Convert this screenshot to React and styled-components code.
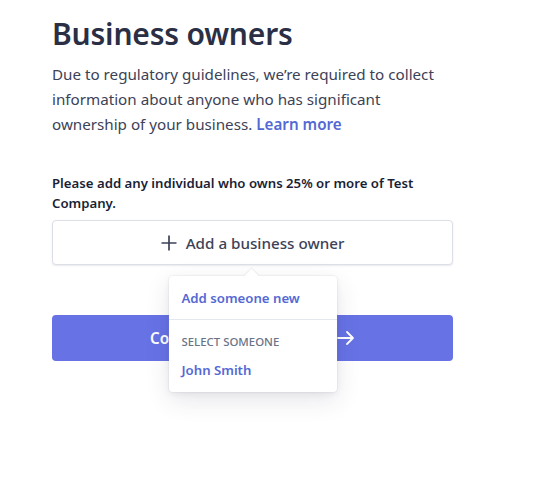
import React from "react";
import styled, { createGlobalStyle } from "styled-components";

const GlobalStyle = createGlobalStyle`
  body {
    margin: 0;
    background: #ffffff;
    font-family: 'Noto Sans', 'Open Sans', sans-serif;
    -webkit-font-smoothing: antialiased;
  }
`;

const Page = styled.div`
  box-sizing: border-box;
  width: 453px;
  min-height: 485px;
  padding: 12px 0 40px 52px;
`;

const Title = styled.h1`
  font-size: 30px;
  line-height: 44px;
  font-weight: 600;
  color: #2a2f45;
  margin: 0 0 6px;
  letter-spacing: -0.2px;
`;

const Intro = styled.p`
  font-size: 15.2px;
  line-height: 25px;
  color: #3c4257;
  margin: 0;
`;

const Link = styled.a`
  color: #5469d4;
  font-weight: 600;
  text-decoration: none;
`;

const Label = styled.p`
  font-size: 13.2px;
  line-height: 20px;
  font-weight: 600;
  color: #1a1f36;
  margin: 36px 0 7px;
`;

const Field = styled.div`
  position: relative;
  z-index: 2;
`;

const AddButton = styled.button`
  width: 100%;
  height: 45px;
  display: flex;
  align-items: center;
  justify-content: center;
  gap: 9px;
  background: #fff;
  border: 1px solid #dcdfe6;
  border-radius: 4px;
  box-shadow: 0 1px 2px rgba(50, 50, 93, 0.1);
  font-family: inherit;
  font-size: 15.2px;
  font-weight: 500;
  color: #3c4257;
  cursor: pointer;
`;

const Menu = styled.div`
  position: absolute;
  top: 56px;
  left: 50%;
  margin-left: -84px;
  width: 168px;
  background: #fff;
  border-radius: 4px;
  box-shadow: 0 0 0 1px rgba(136, 152, 170, 0.08),
    0 8px 24px rgba(50, 50, 93, 0.12), 0 2px 6px rgba(0, 0, 0, 0.06);

  &::before {
    content: "";
    position: absolute;
    top: -5px;
    left: 77px;
    width: 11px;
    height: 11px;
    background: #fff;
    transform: rotate(45deg);
    box-shadow: -1px -1px 1px rgba(136, 152, 170, 0.12);
  }
`;

const MenuSection = styled.div`
  position: relative;
  padding: ${p => p.$pad || "12px"};
  border-top: ${p => (p.$divided ? "1px solid #e3e8ee" : "none")};
`;

const MenuItem = styled.div`
  font-size: 13.2px;
  line-height: 20px;
  font-weight: 600;
  color: #5469d4;
  cursor: pointer;
`;

const MenuHeading = styled.div`
  font-size: 11.4px;
  line-height: 16px;
  font-weight: 500;
  text-transform: uppercase;
  color: #697386;
  margin-bottom: 10px;
`;

const Continue = styled.button`
  width: 100%;
  height: 46px;
  margin-top: 50px;
  display: flex;
  align-items: center;
  justify-content: center;
  gap: 12px;
  background: #6772e5;
  border: none;
  border-radius: 4px;
  font-family: inherit;
  font-size: 15.2px;
  font-weight: 600;
  color: #fff;
  cursor: pointer;
`;

const PlusIcon = () => (
  <svg width="16" height="16" viewBox="0 0 16 16" fill="none">
    <path d="M8 0.5v15M0.5 8h15" stroke="#3c4257" strokeWidth="1.7" />
  </svg>
);

const ArrowIcon = () => (
  <svg width="18" height="16" viewBox="0 0 18 16" fill="none">
    <path
      d="M1 8h15M10 2l6 6-6 6"
      stroke="#fff"
      strokeWidth="1.8"
      strokeLinecap="round"
      strokeLinejoin="round"
    />
  </svg>
);

export default function App() {
  return (
    <>
      <GlobalStyle />
      <Page>
        <Title>Business owners</Title>
        <Intro>
          Due to regulatory guidelines, we’re required to collect information
          about anyone who has significant ownership of your business.{" "}
          <Link href="#">Learn more</Link>
        </Intro>
        <Label>Please add any individual who owns 25% or more of Test Company.</Label>
        <Field>
          <AddButton>
            <PlusIcon />
            Add a business owner
          </AddButton>
          <Menu>
            <MenuSection $pad="12px 12px 11px 13px">
              <MenuItem>Add someone new</MenuItem>
            </MenuSection>
            <MenuSection $divided $pad="14px 12px 12px 13px">
              <MenuHeading>Select someone</MenuHeading>
              <MenuItem>John Smith</MenuItem>
            </MenuSection>
          </Menu>
        </Field>
        <Continue>
          Continue to verification
          <ArrowIcon />
        </Continue>
      </Page>
    </>
  );
}
